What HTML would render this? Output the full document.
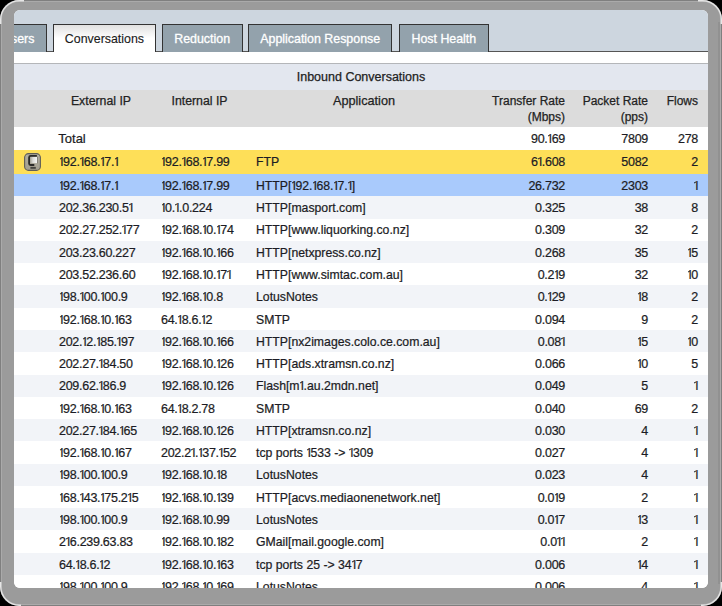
<!DOCTYPE html>
<html><head><meta charset="utf-8">
<style>
html,body{margin:0;padding:0;width:722px;height:606px;overflow:hidden;background:#000;}
body{position:relative;font-family:"Liberation Sans",sans-serif;}
.frame{position:absolute;left:0;top:0;width:722px;height:606px;border-radius:19px;background:#000;}
.f2{position:absolute;left:0;top:0;right:0;bottom:0;border-radius:19px;background:#7f7f7f;}
.f3{position:absolute;left:1px;top:1px;right:1px;bottom:1px;border-radius:18px;background:#aaa;}
.f4{position:absolute;left:2px;top:2px;right:2px;bottom:2px;border-radius:17px;background:#9b9b9b;}
.inner{position:absolute;left:14px;top:10px;width:694px;height:577.5px;border-radius:6px;overflow:hidden;background:#fff;}
.wrap{position:absolute;left:-14px;top:-10px;width:722px;height:606px;}
.tabbar{position:absolute;left:0;top:10px;width:722px;height:42px;background:#cdd6df;}
.tabline{position:absolute;left:0;top:51px;width:722px;height:1px;background:#555;}
.tab{position:absolute;top:24px;height:27px;background:#93a2ac;border:1px solid #333;border-bottom:none;box-sizing:border-box;height:28px;color:#fff;font-size:12.4px;text-align:center;-webkit-text-stroke:0.3px #fff;}
.tab span{position:absolute;left:0;right:0;top:7px;line-height:14px;}
.tab.act{background:linear-gradient(#e0e0e0,#ffffff 48%);color:#1a1a1a;height:29px;-webkit-text-stroke:0.12px #1a1a1a;}
.white{position:absolute;left:0;top:52px;width:722px;height:11px;background:#fff;}
.gline{position:absolute;left:0;top:63px;width:722px;height:1px;background:#b4b6b9;}
.title{position:absolute;left:0;top:64px;width:722px;height:25.7px;background:#e3e7ef;}
.head{position:absolute;left:0;top:89.7px;width:722px;height:37.6px;background:#dcdcdc;}
.t{position:absolute;font-size:12px;line-height:14px;color:#1c1c24;white-space:nowrap;-webkit-text-stroke:0.22px #1c1c24;}
.t b{font-weight:normal;position:relative;margin-left:1.5px;letter-spacing:-0.2px;}
.t b::before{content:"";position:absolute;left:-1.0px;top:2.7px;width:2.1px;height:1.1px;background:currentColor;transform:rotate(-35deg);}
.c1{left:59px;}
.n{font-size:12.5px;letter-spacing:-0.28px;}
.c2{left:161px;}
.c3{left:256px;font-size:12.25px;}
.c4{right:157px;text-align:right;}
.c5{right:74px;text-align:right;}
.c6{right:24px;text-align:right;}
.h{position:absolute;font-size:12px;line-height:16px;color:#222;white-space:nowrap;-webkit-text-stroke:0.25px #222;}
.r{position:absolute;left:0;width:722px;}
.ico{position:absolute;left:24.2px;width:16.6px;height:17.4px;border-radius:4px;background:#aaa594;box-shadow:inset 0 0 0 1px #55534c;}
.ico .scr{position:absolute;left:4px;top:3px;width:8px;height:9px;border:2px solid #2e2e2e;border-radius:2px;box-sizing:border-box;}
.ico .scw{position:absolute;left:7px;top:5px;width:4px;height:6px;background:#eee;}
.ico .stand{position:absolute;left:6px;top:12px;width:5px;height:2px;background:#3a3a3a;}
</style></head><body>
<div class="frame"><div class="f2"></div><div class="f3"></div><div class="f4"></div><div style="position:absolute;left:718px;top:22px;width:2px;height:562px;background:#919191"></div></div>
<svg style="position:absolute;left:0;top:0" width="722" height="606"><g fill="none" stroke="#e6e6e6" stroke-width="1.4">
<path d="M0.7 24 V19.5 A18.8 18.8 0 0 1 19.5 0.7 H24"/><path d="M698 0.7 H702.5 A18.8 18.8 0 0 1 721.3 19.5 V24"/>
<path d="M0.7 582 V586.5 A18.8 18.8 0 0 0 19.5 605.3 H21"/><path d="M701 605.3 H702.5 A18.8 18.8 0 0 0 721.3 586.5 V582"/></g></svg>
<div class="inner"><div class="wrap">
<div class="tabbar"></div>
<div class="tabline"></div>
<div class="tab" style="left:-10.0px;width:56.5px"><span>Users</span></div>
<div class="tab act" style="left:52.6px;width:103.7px"><span>Conversations</span></div>
<div class="tab" style="left:161.6px;width:81.1px"><span>Reduction</span></div>
<div class="tab" style="left:247.9px;width:144.6px"><span>Application Response</span></div>
<div class="tab" style="left:398.8px;width:90.1px"><span>Host Health</span></div>
<div class="white"></div>
<div class="gline"></div>
<div class="title"></div>
<div class="head"></div>
<div class="h" style="left:0;width:722px;text-align:center;top:69px;font-size:12.5px;"><span style="position:relative;left:0px">Inbound Conversations</span></div>
<div class="h" style="left:50px;width:102px;text-align:center;top:93px;font-size:12.3px">External IP</div>
<div class="h" style="left:152px;width:95px;text-align:center;top:93px;font-size:12.3px">Internal IP</div>
<div class="h" style="left:247px;width:234px;text-align:center;top:93px;font-size:12.7px">Application</div>
<div class="h" style="right:157px;text-align:right;top:93px">Transfer Rate<br>(Mbps)</div>
<div class="h" style="right:74px;text-align:right;top:93px">Packet Rate<br>(pps)</div>
<div class="h" style="right:24px;text-align:right;top:93px">Flows</div>
<div class="r" style="top:127.40px;height:22.70px;background:#ffffff"></div>
<div class="t c1" style="top:132.00px;font-size:13px;left:58.3px">Total</div>
<div class="t c4 n" style="top:132.00px">90.<b>l</b>69</div>
<div class="t c5 n" style="top:132.00px">7809</div>
<div class="t c6 n" style="top:132.00px">278</div>
<div class="r" style="top:150.10px;height:23.70px;background:#fedf58"></div>
<svg style="position:absolute;left:24px;top:153px" width="17" height="18" viewBox="0 0 17 18">
<defs><linearGradient id="sg" x1="0" x2="1" y1="0" y2="0"><stop offset="0" stop-color="#a8a69c"/><stop offset="0.4" stop-color="#dcdcd8"/><stop offset="1" stop-color="#f6f6f6"/></linearGradient>
<linearGradient id="bg" x1="0" x2="0" y1="0" y2="1"><stop offset="0" stop-color="#b4b0a1"/><stop offset="1" stop-color="#a39f90"/></linearGradient></defs>
<rect x="0.6" y="0.6" width="15.8" height="16.8" rx="4" ry="4" fill="url(#bg)" stroke="#605e56" stroke-width="1.1"/>
<rect x="6.3" y="3.9" width="6.7" height="6.2" fill="url(#sg)"/>
<rect x="13" y="3.6" width="0.8" height="6.8" fill="#7c7a72"/>
<path d="M12.9 2.85 H6.6 Q5.1 2.85 5.1 4.4 V10.6 Q5.1 12 6.6 12 H10.3" fill="none" stroke="#2a2a28" stroke-width="1.8"/>
<rect x="6.4" y="13.9" width="5.4" height="1.9" fill="#43423e"/>
</svg>
<div class="t c1 n" style="top:155.00px"><b>l</b>92.<b>l</b>68.<b>l</b>7.<b>l</b></div>
<div class="t c2 n" style="top:155.00px"><b>l</b>92.<b>l</b>68.<b>l</b>7.99</div>
<div class="t c3" style="top:155.00px">FTP</div>
<div class="t c4 n" style="top:155.00px">6<b>l</b>.608</div>
<div class="t c5 n" style="top:155.00px">5082</div>
<div class="t c6 n" style="top:155.00px">2</div>
<div class="r" style="top:173.80px;height:22.50px;background:#a9cafc"></div>
<div class="t c1 n" style="top:179.00px"><b>l</b>92.<b>l</b>68.<b>l</b>7.<b>l</b></div>
<div class="t c2 n" style="top:179.00px"><b>l</b>92.<b>l</b>68.<b>l</b>7.99</div>
<div class="t c3" style="top:179.00px">HTTP[<b>l</b>92.<b>l</b>68.<b>l</b>7.<b>l</b>]</div>
<div class="t c4 n" style="top:179.00px">26.732</div>
<div class="t c5 n" style="top:179.00px">2303</div>
<div class="t c6 n" style="top:179.00px"><b>l</b></div>
<div class="r" style="top:196.30px;height:22.28px;background:#f2f4f8"></div>
<div class="t c1 n" style="top:201.00px">202.36.230.5<b>l</b></div>
<div class="t c2 n" style="top:201.00px"><b>l</b>0.<b>l</b>.0.224</div>
<div class="t c3" style="top:201.00px">HTTP[masport.com]</div>
<div class="t c4 n" style="top:201.00px">0.325</div>
<div class="t c5 n" style="top:201.00px">38</div>
<div class="t c6 n" style="top:201.00px">8</div>
<div class="r" style="top:218.58px;height:22.28px;background:#ffffff"></div>
<div class="t c1 n" style="top:223.00px">202.27.252.<b>l</b>77</div>
<div class="t c2 n" style="top:223.00px"><b>l</b>92.<b>l</b>68.<b>l</b>0.<b>l</b>74</div>
<div class="t c3" style="top:223.00px">HTTP[www.liquorking.co.nz]</div>
<div class="t c4 n" style="top:223.00px">0.309</div>
<div class="t c5 n" style="top:223.00px">32</div>
<div class="t c6 n" style="top:223.00px">2</div>
<div class="r" style="top:240.86px;height:22.28px;background:#f2f4f8"></div>
<div class="t c1 n" style="top:246.00px">203.23.60.227</div>
<div class="t c2 n" style="top:246.00px"><b>l</b>92.<b>l</b>68.<b>l</b>0.<b>l</b>66</div>
<div class="t c3" style="top:246.00px">HTTP[netxpress.co.nz]</div>
<div class="t c4 n" style="top:246.00px">0.268</div>
<div class="t c5 n" style="top:246.00px">35</div>
<div class="t c6 n" style="top:246.00px"><b>l</b>5</div>
<div class="r" style="top:263.14px;height:22.28px;background:#ffffff"></div>
<div class="t c1 n" style="top:268.00px">203.52.236.60</div>
<div class="t c2 n" style="top:268.00px"><b>l</b>92.<b>l</b>68.<b>l</b>0.<b>l</b>7<b>l</b></div>
<div class="t c3" style="top:268.00px">HTTP[www.simtac.com.au]</div>
<div class="t c4 n" style="top:268.00px">0.2<b>l</b>9</div>
<div class="t c5 n" style="top:268.00px">32</div>
<div class="t c6 n" style="top:268.00px"><b>l</b>0</div>
<div class="r" style="top:285.42px;height:22.28px;background:#f2f4f8"></div>
<div class="t c1 n" style="top:290.00px"><b>l</b>98.<b>l</b>00.<b>l</b>00.9</div>
<div class="t c2 n" style="top:290.00px"><b>l</b>92.<b>l</b>68.<b>l</b>0.8</div>
<div class="t c3" style="top:290.00px">LotusNotes</div>
<div class="t c4 n" style="top:290.00px">0.<b>l</b>29</div>
<div class="t c5 n" style="top:290.00px"><b>l</b>8</div>
<div class="t c6 n" style="top:290.00px">2</div>
<div class="r" style="top:307.70px;height:22.28px;background:#ffffff"></div>
<div class="t c1 n" style="top:313.00px"><b>l</b>92.<b>l</b>68.<b>l</b>0.<b>l</b>63</div>
<div class="t c2 n" style="top:313.00px">64.<b>l</b>8.6.<b>l</b>2</div>
<div class="t c3" style="top:313.00px">SMTP</div>
<div class="t c4 n" style="top:313.00px">0.094</div>
<div class="t c5 n" style="top:313.00px">9</div>
<div class="t c6 n" style="top:313.00px">2</div>
<div class="r" style="top:329.98px;height:22.28px;background:#f2f4f8"></div>
<div class="t c1 n" style="top:335.00px">202.<b>l</b>2.<b>l</b>85.<b>l</b>97</div>
<div class="t c2 n" style="top:335.00px"><b>l</b>92.<b>l</b>68.<b>l</b>0.<b>l</b>66</div>
<div class="t c3" style="top:335.00px">HTTP[nx2images.colo.ce.com.au]</div>
<div class="t c4 n" style="top:335.00px">0.08<b>l</b></div>
<div class="t c5 n" style="top:335.00px"><b>l</b>5</div>
<div class="t c6 n" style="top:335.00px"><b>l</b>0</div>
<div class="r" style="top:352.26px;height:22.28px;background:#ffffff"></div>
<div class="t c1 n" style="top:357.00px">202.27.<b>l</b>84.50</div>
<div class="t c2 n" style="top:357.00px"><b>l</b>92.<b>l</b>68.<b>l</b>0.<b>l</b>26</div>
<div class="t c3" style="top:357.00px">HTTP[ads.xtramsn.co.nz]</div>
<div class="t c4 n" style="top:357.00px">0.066</div>
<div class="t c5 n" style="top:357.00px"><b>l</b>0</div>
<div class="t c6 n" style="top:357.00px">5</div>
<div class="r" style="top:374.54px;height:22.28px;background:#f2f4f8"></div>
<div class="t c1 n" style="top:379.00px">209.62.<b>l</b>86.9</div>
<div class="t c2 n" style="top:379.00px"><b>l</b>92.<b>l</b>68.<b>l</b>0.<b>l</b>26</div>
<div class="t c3" style="top:379.00px">Flash[m<b>l</b>.au.2mdn.net]</div>
<div class="t c4 n" style="top:379.00px">0.049</div>
<div class="t c5 n" style="top:379.00px">5</div>
<div class="t c6 n" style="top:379.00px"><b>l</b></div>
<div class="r" style="top:396.82px;height:22.28px;background:#ffffff"></div>
<div class="t c1 n" style="top:402.00px"><b>l</b>92.<b>l</b>68.<b>l</b>0.<b>l</b>63</div>
<div class="t c2 n" style="top:402.00px">64.<b>l</b>8.2.78</div>
<div class="t c3" style="top:402.00px">SMTP</div>
<div class="t c4 n" style="top:402.00px">0.040</div>
<div class="t c5 n" style="top:402.00px">69</div>
<div class="t c6 n" style="top:402.00px">2</div>
<div class="r" style="top:419.10px;height:22.28px;background:#f2f4f8"></div>
<div class="t c1 n" style="top:424.00px">202.27.<b>l</b>84.<b>l</b>65</div>
<div class="t c2 n" style="top:424.00px"><b>l</b>92.<b>l</b>68.<b>l</b>0.<b>l</b>26</div>
<div class="t c3" style="top:424.00px">HTTP[xtramsn.co.nz]</div>
<div class="t c4 n" style="top:424.00px">0.030</div>
<div class="t c5 n" style="top:424.00px">4</div>
<div class="t c6 n" style="top:424.00px"><b>l</b></div>
<div class="r" style="top:441.38px;height:22.28px;background:#ffffff"></div>
<div class="t c1 n" style="top:446.00px"><b>l</b>92.<b>l</b>68.<b>l</b>0.<b>l</b>67</div>
<div class="t c2 n" style="top:446.00px">202.2<b>l</b>.<b>l</b>37.<b>l</b>52</div>
<div class="t c3" style="top:446.00px">tcp ports <b>l</b>533 -&gt; <b>l</b>309</div>
<div class="t c4 n" style="top:446.00px">0.027</div>
<div class="t c5 n" style="top:446.00px">4</div>
<div class="t c6 n" style="top:446.00px"><b>l</b></div>
<div class="r" style="top:463.66px;height:22.28px;background:#f2f4f8"></div>
<div class="t c1 n" style="top:468.00px"><b>l</b>98.<b>l</b>00.<b>l</b>00.9</div>
<div class="t c2 n" style="top:468.00px"><b>l</b>92.<b>l</b>68.<b>l</b>0.<b>l</b>8</div>
<div class="t c3" style="top:468.00px">LotusNotes</div>
<div class="t c4 n" style="top:468.00px">0.023</div>
<div class="t c5 n" style="top:468.00px">4</div>
<div class="t c6 n" style="top:468.00px"><b>l</b></div>
<div class="r" style="top:485.94px;height:22.28px;background:#ffffff"></div>
<div class="t c1 n" style="top:491.00px"><b>l</b>68.<b>l</b>43.<b>l</b>75.2<b>l</b>5</div>
<div class="t c2 n" style="top:491.00px"><b>l</b>92.<b>l</b>68.<b>l</b>0.<b>l</b>39</div>
<div class="t c3" style="top:491.00px">HTTP[acvs.mediaonenetwork.net]</div>
<div class="t c4 n" style="top:491.00px">0.0<b>l</b>9</div>
<div class="t c5 n" style="top:491.00px">2</div>
<div class="t c6 n" style="top:491.00px"><b>l</b></div>
<div class="r" style="top:508.22px;height:22.28px;background:#f2f4f8"></div>
<div class="t c1 n" style="top:513.00px"><b>l</b>98.<b>l</b>00.<b>l</b>00.9</div>
<div class="t c2 n" style="top:513.00px"><b>l</b>92.<b>l</b>68.<b>l</b>0.99</div>
<div class="t c3" style="top:513.00px">LotusNotes</div>
<div class="t c4 n" style="top:513.00px">0.0<b>l</b>7</div>
<div class="t c5 n" style="top:513.00px"><b>l</b>3</div>
<div class="t c6 n" style="top:513.00px"><b>l</b></div>
<div class="r" style="top:530.50px;height:22.28px;background:#ffffff"></div>
<div class="t c1 n" style="top:535.00px">2<b>l</b>6.239.63.83</div>
<div class="t c2 n" style="top:535.00px"><b>l</b>92.<b>l</b>68.<b>l</b>0.<b>l</b>82</div>
<div class="t c3" style="top:535.00px">GMail[mail.google.com]</div>
<div class="t c4 n" style="top:535.00px">0.0<b>l</b><b>l</b></div>
<div class="t c5 n" style="top:535.00px">2</div>
<div class="t c6 n" style="top:535.00px"><b>l</b></div>
<div class="r" style="top:552.78px;height:22.28px;background:#f2f4f8"></div>
<div class="t c1 n" style="top:558.00px">64.<b>l</b>8.6.<b>l</b>2</div>
<div class="t c2 n" style="top:558.00px"><b>l</b>92.<b>l</b>68.<b>l</b>0.<b>l</b>63</div>
<div class="t c3" style="top:558.00px">tcp ports 25 -&gt; 34<b>l</b>7</div>
<div class="t c4 n" style="top:558.00px">0.006</div>
<div class="t c5 n" style="top:558.00px"><b>l</b>4</div>
<div class="t c6 n" style="top:558.00px"><b>l</b></div>
<div class="r" style="top:575.06px;height:22.28px;background:#ffffff"></div>
<div class="t c1 n" style="top:580.00px"><b>l</b>98.<b>l</b>00.<b>l</b>00.9</div>
<div class="t c2 n" style="top:580.00px"><b>l</b>92.<b>l</b>68.<b>l</b>0.<b>l</b>69</div>
<div class="t c3" style="top:580.00px">LotusNotes</div>
<div class="t c4 n" style="top:580.00px">0.006</div>
<div class="t c5 n" style="top:580.00px">4</div>
<div class="t c6 n" style="top:580.00px"><b>l</b></div>
</div></div>
</body></html>
